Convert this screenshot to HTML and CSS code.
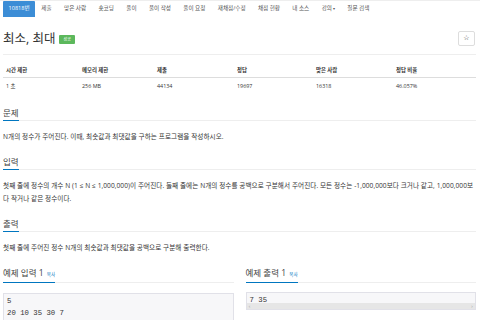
FILE: index.html
```html
<!DOCTYPE html>
<html lang="ko">
<head>
  <meta charset="UTF-8" />
  <meta name="viewport" content="width=device-width, initial-scale=1" />
  <title>10818번: 최소, 최대</title>
  <link rel="stylesheet" href="styles.css">
</head>
<body>
  <ul class="menu">
    <li class="activo">10818번</li>
    <li>제출</li>
    <li>맞은 사람</li>
    <li>숏코딩</li>
    <li>풀이</li>
    <li>풀이 작성</li>
    <li>풀이 요청</li>
    <li>재채점/수정</li>
    <li>채점 현황</li>
    <li>내 소스</li>
    <li>강의<span class="caret">▾</span></li>
    <li>질문 검색</li>
  </ul>

  <div class="contenedor">
    <div class="titulo">
      <h1>최소, 최대 <span class="badge">성공</span></h1>
      <button class="estrella">☆</button>
    </div>

    <div class="info">
      <div class="th">시간 제한</div>
      <div class="th">메모리 제한</div>
      <div class="th">제출</div>
      <div class="th">정답</div>
      <div class="th">맞은 사람</div>
      <div class="th">정답 비율</div>
      <div class="td">1 초</div>
      <div class="td">256 MB</div>
      <div class="td">44134</div>
      <div class="td">19697</div>
      <div class="td">16318</div>
      <div class="td">46.057%</div>
    </div>

    <h3 class="seccion"><span>문제</span></h3>
    <p>N개의 정수가 주어진다. 이때, 최솟값과 최댓값을 구하는 프로그램을 작성하시오.</p>

    <h3 class="seccion"><span>입력</span></h3>
    <p>첫째 줄에 정수의 개수 N (1 ≤ N ≤ 1,000,000)이 주어진다. 둘째 줄에는 N개의 정수를 공백으로 구분해서 주어진다. 모든 정수는 -1,000,000보다 크거나 같고, 1,000,000보다 작거나 같은 정수이다.</p>

    <h3 class="seccion"><span>출력</span></h3>
    <p>첫째 줄에 주어진 정수 N개의 최솟값과 최댓값을 공백으로 구분해 출력한다.</p>

    <div class="ejemplos">
      <div>
        <h3 class="seccion ejemplo"><span>예제 입력 1 <a class="copiar">복사</a></span></h3>
        <pre class="codigo">5
20 10 35 30 7</pre>
      </div>
      <div>
        <h3 class="seccion ejemplo"><span>예제 출력 1 <a class="copiar">복사</a></span></h3>
        <div class="codigo corto">
          <pre>7 35</pre>
          <div class="barra"><span>‹</span><span>›</span></div>
        </div>
      </div>
    </div>
  </div>
</body>
</html>
```

FILE: styles.css
```css
body {
  margin: 0;
  font-family: "Open Sans", "Noto Sans CJK KR", sans-serif;
  color: #333;
  background: #fff;
}

.menu {
  display: flex;
  list-style: none;
  margin: 0;
  padding: 0 0 0 3px;
  height: 16px;
  border-top: 1px solid #eee;
}

.menu li {
  padding: 0 6.2px;
  font-size: 5.6px;
  line-height: 15px;
  color: #555;
  white-space: nowrap;
}

.menu li.activo {
  background: #3c8dd6;
  color: white;
  padding: 0 5.5px;
  border-radius: 1px 1px 0 0;
}

.caret {
  font-size: 4px;
  margin-left: 1px;
}

.contenedor {
  padding: 0 4px 0 3px;
}

.titulo {
  display: flex;
  justify-content: space-between;
  align-items: center;
  height: 21px;
  margin-top: 11px;
  padding-bottom: 5px;
  border-bottom: 1px solid #eee;
}

h1 {
  margin: 0;
  font-size: 12.5px;
  font-weight: normal;
  line-height: 14px;
  display: flex;
  align-items: center;
}

.badge {
  background: #5cb85c;
  color: white;
  font-size: 4px;
  line-height: 9px;
  padding: 0 4px;
  margin-left: 4px;
  border-radius: 1px;
  margin-top: 2px;
}

.estrella {
  width: 17px;
  height: 15px;
  padding: 0;
  margin-right: 1px;
  background: white;
  border: 1px solid #ddd;
  border-radius: 2px;
  font-size: 7px;
  line-height: 13px;
  color: #333;
  font-family: "DejaVu Sans", sans-serif;
}

.info {
  display: grid;
  grid-template-columns: 76px 75px 80px 79px 80px 1fr;
  font-size: 5.4px;
}

.info .th {
  font-weight: bold;
  padding: 11px 3px 3px;
  line-height: 8px;
  border-bottom: 1px solid #ddd;
}

.info .td {
  padding: 4px 3px;
  line-height: 8px;
}

.seccion {
  display: flex;
  align-items: flex-end;
  margin: 12px 0 0;
  border-bottom: 1px solid #eee;
  font-size: 8.5px;
  font-weight: normal;
  color: #444;
}

.seccion span {
  line-height: 13px;
  padding-bottom: 1px;
  border-bottom: 1px solid #0076c0;
  margin-bottom: -1px;
}

p {
  margin: 9px 0 0;
  font-size: 6.6px;
  letter-spacing: 0.06px;
  line-height: 13px;
}

.ejemplos {
  display: grid;
  grid-template-columns: 1fr 1fr;
  column-gap: 12px;
}

.ejemplo {
  margin-top: 12px;
}

.copiar {
  font-size: 4.5px;
  color: #0076c0;
  margin-left: 1px;
}

.codigo {
  margin: 10px 0 0;
  background: #f7f7f9;
  border: 1px solid #e1e1e8;
  font-family: "Liberation Mono", monospace;
  font-size: 7.3px;
  line-height: 12px;
  padding: 1px 3px 4px;
  color: #333;
}

.codigo.corto {
  margin-top: 9px;
  padding: 0;
}

.codigo.corto pre {
  margin: 0;
  height: 9px;
  padding: 1px 3px 0;
  overflow: hidden;
  font: inherit;
}

.barra {
  display: flex;
  justify-content: space-between;
  height: 6px;
  padding: 0 2px;
  background: #e6e6e6;
  font-family: "DejaVu Sans", sans-serif;
  font-size: 5px;
  line-height: 6px;
  color: #aaa;
}
```
